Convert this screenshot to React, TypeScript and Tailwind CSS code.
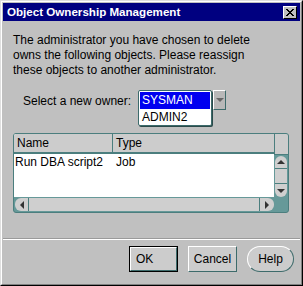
import React from "react";

function Arrow({ dir }: { dir: "up" | "down" | "left" | "right" }) {
  const pts =
    dir === "up"
      ? "1,5 5,1 9,5"
      : dir === "down"
      ? "1,1 5,5 9,1"
      : dir === "left"
      ? "5,1 1,5 5,9"
      : "1,1 5,5 1,9";
  const w = dir === "up" || dir === "down" ? 10 : 6;
  const h = dir === "up" || dir === "down" ? 6 : 10;
  return (
    <svg width={w} height={h} viewBox={`0 0 ${w} ${h}`}>
      <polygon points={pts} fill="#333" />
    </svg>
  );
}

export default function App() {
  return (
    <div
      className="w-[303px] h-[286px] bg-[#c0c0c0] overflow-hidden"
      style={{ fontFamily: '"Liberation Sans", Arial, sans-serif' }}
    >
      <div className="w-[303px] h-[286px] border-t border-l border-[#dfdfdf] border-r border-b border-r-black border-b-black">
        <div className="w-full h-full border-t border-l border-white border-r border-b border-r-[#808080] border-b-[#808080] p-[1px] flex flex-col">
          {/* title bar */}
          <div className="h-[18px] bg-[#000080] flex items-center justify-between pl-[4px] pr-[3px]">
            <span className="text-white font-bold text-[11.6px] leading-none">
              Object Ownership Management
            </span>
            <div className="w-[14px] h-[13px] bg-[#c0c0c0] border-t border-l border-white border-r border-b border-r-black border-b-black flex items-center justify-center">
              <svg width="8" height="7" viewBox="0 0 8 7">
                <path d="M0 0 L7 7 M1 0 L8 7 M7 0 L0 7 M8 0 L1 7" stroke="black" strokeWidth="1" />
              </svg>
            </div>
          </div>

          {/* body */}
          <div className="flex flex-col px-[10px] pt-[12px] text-[12px] text-black">
            <p className="leading-[15px] text-[12px]">
              The administrator you have chosen to delete
              <br />
              owns the following objects. Please reassign
              <br />
              these objects to another administrator.
            </p>

            <div className="flex items-start mt-[12px] pl-[10px] h-[40px]">
              <span className="mt-[4px] w-[115px] leading-[15px] whitespace-nowrap">Select a new owner:</span>
              <div className="relative flex items-start">
                <div className="w-[74px] bg-white border border-[#3d6b6b] shadow-[1px_1px_0_#2a4a4a] rounded-[2px] flex flex-col text-[12px] leading-[16px]">
                  <div className="bg-[#0000f0] text-white pl-[2px] h-[17px] mt-[1px] mx-[1px]">SYSMAN</div>
                  <div className="pl-[3px] h-[16px]">ADMIN2</div>
                </div>
                <div className="ml-[1px] w-[13px] h-[20px] bg-[#b8b8b8] border-t border-l border-white border-r border-b border-r-[#3d6b6b] border-b-[#3d6b6b] flex items-center justify-center">
                  <svg width="8" height="5" viewBox="0 0 8 5">
                    <polygon points="0,0 8,0 4,4" fill="#666" />
                  </svg>
                </div>
              </div>
            </div>

            {/* table */}
            <div className="mt-[3px] w-[276px] h-[80px] border border-[#4b7e7e] rounded-[3px] bg-[#669999] flex flex-col overflow-hidden">
              <div className="flex h-[63px]">
                <div className="flex flex-col w-[260px] bg-white">
                  <div className="flex h-[20px] bg-[#cccccc] border-b-2 border-[#4b7e7e]">
                    <div className="w-[99px] pl-[3px] border-r border-[#4b7e7e] leading-[18px]">Name</div>
                    <div className="flex-1 pl-[3px] leading-[18px]">Type</div>
                  </div>
                  <div className="flex leading-[17px]">
                    <div className="w-[100px] pl-[1px]">Run DBA script2</div>
                    <div className="pl-[2px]">Job</div>
                  </div>
                </div>
                <div className="w-[14px] flex flex-col">
                  <div className="h-[21px] bg-[#cccccc] border-l border-b border-[#4b7e7e]" />
                  <div className="flex-1 flex flex-col items-stretch px-[1px] pt-[1px]">
                    <div className="h-[13px] bg-[#cfcfcf] rounded-t-[6px] flex items-center justify-center border-b border-[#4b7e7e]">
                      <Arrow dir="up" />
                    </div>
                    <div className="flex-1 bg-[#cfcfcf] border-b border-[#4b7e7e]" />
                    <div className="h-[13px] bg-[#cfcfcf] rounded-b-[6px] flex items-center justify-center">
                      <Arrow dir="down" />
                    </div>
                  </div>
                </div>
              </div>
              <div className="flex h-[15px] pt-[1px] pl-[1px] pr-[14px]">
                <div className="w-[14px] h-[13px] bg-[#cfcfcf] rounded-l-[6px] flex items-center justify-center border-r border-[#4b7e7e]">
                  <Arrow dir="left" />
                </div>
                <div className="flex-1 h-[13px] bg-[#cfcfcf] border-r border-[#4b7e7e]" />
                <div className="w-[14px] h-[13px] bg-[#cfcfcf] rounded-r-[6px] flex items-center justify-center">
                  <Arrow dir="right" />
                </div>
              </div>
            </div>
          </div>

          {/* separator */}
          <div className="mt-[25px] h-[2px] border-t border-[#9a9a9a] border-b border-b-white" />

          {/* buttons */}
          <div className="flex justify-end gap-[10px] pr-[6px] mt-[6px] text-[12px]">
            <div className="w-[49px] h-[26px] border border-black flex">
              <div className="flex-1 border-t border-l border-white border-r border-b border-r-[#3d6b6b] border-b-[#3d6b6b] bg-[#cccccc] pl-[5px] leading-[22px]">
                OK
              </div>
            </div>
            <div className="w-[49px] h-[26px] border-t border-l border-white border-r border-b border-r-[#3d6b6b] border-b-[#3d6b6b] bg-[#cccccc] flex items-center justify-center">
              Cancel
            </div>
            <div className="w-[47px] h-[26px] rounded-full border-t border-l border-white border-r border-b border-r-[#3d6b6b] border-b-[#3d6b6b] bg-[#cccccc] flex items-center justify-center">
              Help
            </div>
          </div>
        </div>
      </div>
    </div>
  );
}
